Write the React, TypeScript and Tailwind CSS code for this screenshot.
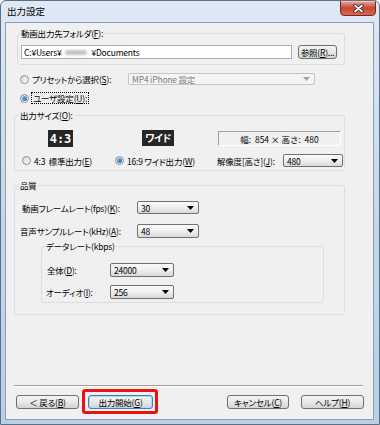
import React from "react";

const btnBase =
  "flex h-[14px] items-center justify-center rounded-[3px] border bg-gradient-to-b from-[#f3f3f3] via-[#e9e9e9] to-[#d3d3d3] text-black";

function Radio({ on }: { on?: boolean }) {
  return (
    <span className="flex h-[9px] w-[9px] shrink-0 items-center justify-center rounded-full border border-[#8d8f91] bg-gradient-to-br from-[#d6d8da] to-[#fbfbfb]">
      {on && <span className="h-[5px] w-[5px] rounded-full bg-gradient-to-br from-[#7cc0f0] to-[#1b5eae]" />}
    </span>
  );
}

function Arrow({ grey }: { grey?: boolean }) {
  return (
    <svg width="7" height="4" viewBox="0 0 7 4" className="shrink-0">
      <path d="M0 0H7L3.5 4Z" fill={grey ? "#a3a3a3" : "#000"} />
    </svg>
  );
}

function Combo({ value, className, disabled }: { value: string; className: string; disabled?: boolean }) {
  return (
    <div
      className={`flex shrink-0 items-center justify-between rounded-[2px] border pl-[3px] pr-[4px] ${className} ${
        disabled
          ? "border-[#c3c6c9] bg-[#f4f4f4] text-[#7d7d7d]"
          : "border-[#707070] bg-gradient-to-b from-[#fafafa] via-[#efefef] to-[#d9d9d9] text-black"
      }`}
    >
      <span>{value}</span>
      <Arrow grey={disabled} />
    </div>
  );
}

export default function App() {
  return (
    <div className="flex h-[425px] w-[380px] flex-col overflow-hidden whitespace-nowrap rounded-t-[6px] border border-[#5f6f83] bg-gradient-to-b from-[#dfe9f5] via-[#c4d7ec] to-[#b9cfe8] font-['Noto_Sans_CJK_JP',sans-serif] text-[8.5px] leading-[12px] tracking-[-0.2px] text-black [font-feature-settings:'palt']">
      {/* title bar */}
      <div className="flex h-[21px] shrink-0 items-start justify-between">
        <span className="pl-[6px] pt-[4px] text-[9.5px] tracking-normal [font-feature-settings:normal]">出力設定</span>
        <div className="-mt-px mr-[3px] flex h-[16px] w-[36px] items-center justify-center rounded-b-[4px] border border-[#6e2a22] bg-gradient-to-b from-[#e9a99c] via-[#c8452e] to-[#d9684e] shadow-[inset_0_1px_0_#f4c7bd]">
          <svg width="11" height="9" viewBox="0 0 11 9">
            <path d="M2 1.5L9 7.5M9 1.5L2 7.5" stroke="#3a1a18" strokeWidth="3.4" strokeLinecap="round" />
            <path d="M2 1.5L9 7.5M9 1.5L2 7.5" stroke="#fff" strokeWidth="1.8" strokeLinecap="round" />
          </svg>
        </div>
      </div>

      {/* client area */}
      <div className="mb-[4px] ml-[4px] mr-[5px] flex flex-1 flex-col border border-[#8f9fb3] bg-[#f0f0f0]">
        {/* output folder */}
        <fieldset className="ml-[11px] mr-[28px] mt-[4px] rounded-[3px] border border-[#d5dfe5] pb-[5px] pl-[2px] pr-[7px]">
          <legend className="px-[1px]">
            動画出力先フォルダ(<u>F</u>):
          </legend>
          <div className="mt-[6px] flex">
            <div className="ml-[1px] flex h-[14px] w-[271px] items-center border border-[#abadb3] bg-white pl-[2px]">
              <span>C:¥Users¥</span>
              <span className="mx-[4px] inline-block h-[5px] w-[22px] rounded-full bg-[#c4c4c4] blur-[1px]" />
              <span>¥Documents</span>
            </div>
            <div className={`${btnBase} ml-[6px] w-[39px] border-[#707070]`}>
              参照(<u>R</u>)...
            </div>
          </div>
        </fieldset>

        {/* preset */}
        <div className="ml-[14px] mt-[8px] flex h-[12px] items-center">
          <div className="flex w-[108px] items-center">
            <Radio />
            <span className="ml-[3px]">
              プリセットから選択(<u>S</u>):
            </span>
          </div>
          <Combo value="MP4 iPhone 設定" className="h-[12px] w-[187px]" disabled />
        </div>

        {/* user */}
        <div className="ml-[14px] mt-[7px] flex h-[12px] items-center">
          <Radio on />
          <span className="ml-[2px] border border-dotted border-black px-[1px] leading-[10px]">
            ユーザ設定(<u>U</u>):
          </span>
        </div>

        {/* output size */}
        <fieldset className="ml-[8px] mr-[28px] mt-[5px] rounded-[3px] border border-[#d5dfe5] pb-[3px] pl-[4px]">
          <legend className="px-[1px]">
            出力サイズ(<u>O</u>):
          </legend>
          <div className="mt-[9px] flex items-start">
            <div className="ml-[29px] flex h-[17px] w-[25px] items-center justify-center bg-[#262626] font-['DejaVu_Sans_Mono',monospace] text-[12px] font-bold leading-none tracking-normal text-white">
              4:3
            </div>
            <div className="ml-[69px] flex h-[16px] w-[32px] items-center justify-center bg-[#262626] text-[10px] font-bold leading-none tracking-[-0.5px] text-white">
              ワイド
            </div>
            <div className="ml-[44px] mt-[1px] flex h-[15px] w-[123px] items-center justify-center whitespace-pre border border-b-white border-l-[#a0a0a0] border-r-white border-t-[#a0a0a0] tracking-normal [font-feature-settings:normal]">
              {"幅:  854 × 高さ:  480"}
            </div>
          </div>
          <div className="mt-[7px] flex h-[13px] items-center">
            <div className="ml-[3px] flex w-[93px] items-center">
              <Radio />
              <span className="ml-[3px] whitespace-pre">
                {"4:3  標準出力("}
                <u>E</u>)
              </span>
            </div>
            <div className="flex w-[102px] items-center">
              <Radio on />
              <span className="ml-[3px]">
                16:9 ワイド出力(<u>W</u>)
              </span>
            </div>
            <span className="w-[66px]">
              解像度[高さ](<u>J</u>):
            </span>
            <Combo value="480" className="h-[13px] w-[60px]" />
          </div>
        </fieldset>

        {/* quality */}
        <fieldset className="ml-[8px] mr-[28px] mt-[8px] rounded-[3px] border border-[#d5dfe5] pb-[11px] pl-[4px]">
          <legend className="px-[1px]">品質</legend>
          <div className="mt-[10px] flex h-[13px] items-center">
            <span className="ml-[3px] w-[115px]">
              動画フレームレート(fps)(<u>K</u>):
            </span>
            <Combo value="30" className="h-[13px] w-[62px]" />
          </div>
          <div className="mt-[10px] flex h-[13px] items-center">
            <span className="ml-[1px] w-[117px]">
              音声サンプルレート(kHz)(<u>A</u>):
            </span>
            <Combo value="48" className="h-[14px] w-[62px]" />
          </div>

          <fieldset className="ml-[22px] mt-[3px] w-[283px] rounded-[3px] border border-[#d5dfe5] pb-[3px] pl-[3px]">
            <legend className="px-[1px]">データレート(kbps)</legend>
            <div className="mt-[11px] flex h-[14px] items-center">
              <span className="ml-[2px] w-[63px]">
                全体(<u>D</u>):
              </span>
              <Combo value="24000" className="h-[14px] w-[64px]" />
            </div>
            <div className="mt-[8px] flex h-[14px] items-center">
              <span className="ml-[1px] w-[64px]">
                オーディオ(<u>I</u>):
              </span>
              <Combo value="256" className="h-[14px] w-[64px]" />
            </div>
          </fieldset>
        </fieldset>

        <div className="flex-1" />

        {/* footer */}
        <div className="ml-[8px] mr-[10px] h-px bg-[#a0a0a0] shadow-[0_1px_0_#ffffff]" />
        <div className="mb-[5px] mt-[3px] flex h-[25px] items-center">
          <div className={`${btnBase} ml-[10px] w-[63px] border-[#707070]`}>
            ＜ 戻る(<u>B</u>)
          </div>
          <div className="ml-[3px] flex h-[25px] items-center rounded-[3px] border-[3px] border-[#ee1111] pl-[3px] pr-[2px]">
            <div className={`${btnBase} w-[65px] border-[#3c7fb1] shadow-[inset_0_0_0_1px_#a6dcf7]`}>
              出力開始(<u>G</u>)
            </div>
          </div>
          <div className={`${btnBase} ml-auto w-[62px] border-[#707070]`}>
            キャンセル(<u>C</u>)
          </div>
          <div className={`${btnBase} ml-[12px] mr-[9px] w-[63px] border-[#707070]`}>
            ヘルプ(<u>H</u>)
          </div>
        </div>
      </div>
    </div>
  );
}
